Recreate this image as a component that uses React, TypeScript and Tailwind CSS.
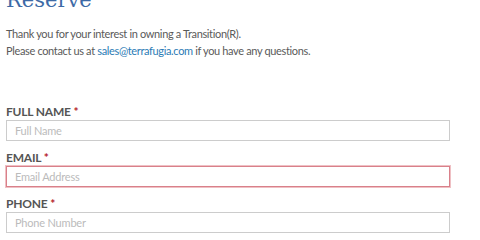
import React from "react";

function Field({ label, placeholder, error }: { label: string; placeholder: string; error?: boolean }) {
  return (
    <div className="flex flex-col">
      <label
        className="text-[12px] font-bold uppercase leading-[14px] tracking-[-0.2px] text-[#555]"
        style={{ fontFamily: "Lato, 'Noto Sans', sans-serif" }}
      >
        {label} <span className="text-[#b5202a]">*</span>
      </label>
      <input
        className={
          "mt-[1px] h-[21px] w-[444px] bg-white px-[8px] text-[11px] tracking-[-0.2px] text-[#555] outline-none placeholder:text-[#bbb] " +
          (error
            ? "border border-[#d9808a] shadow-[0_0_0_1px_#efc0c4]"
            : "border border-[#ccc]")
        }
        style={{ fontFamily: "Lato, sans-serif" }}
        placeholder={placeholder}
      />
    </div>
  );
}

export default function App() {
  return (
    <div className="h-[240px] w-[480px] overflow-hidden bg-white px-[6px]">
      <h1
        className="-mt-[14px] text-[21px] leading-[28px] text-[#3d6aa6]"
        style={{ fontFamily: "'DejaVu Serif', serif" }}
      >
        Reserve
      </h1>
      <div
        className="mt-[11px] text-[11px] leading-[17px] tracking-[-0.35px] text-[#5a5a5a]"
        style={{ fontFamily: "Lato, sans-serif" }}
      >
        <p>Thank you for your interest in owning a Transition(R).</p>
        <p>
          Please contact us at <a className="text-[#2b7bb5]">sales@terrafugia.com</a> if you have any questions.
        </p>
      </div>
      <div className="mt-[46px] flex flex-col gap-[10px]">
        <Field label="Full Name" placeholder="Full Name" />
        <Field label="Email" placeholder="Email Address" error />
        <Field label="Phone" placeholder="Phone Number" />
      </div>
    </div>
  );
}
